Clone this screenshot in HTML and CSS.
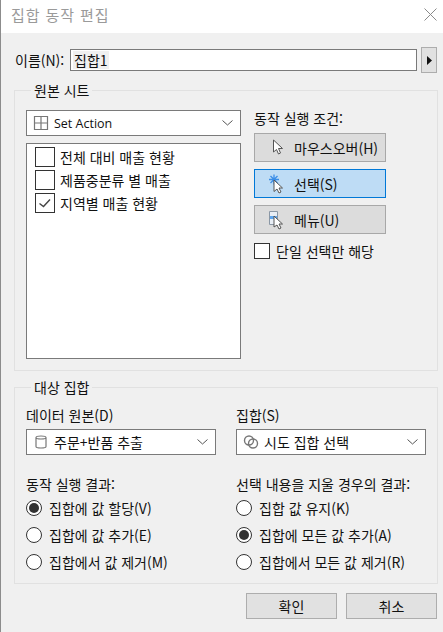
FILE: index.html
```html
<!DOCTYPE html>
<html lang="ko">
<head>
    <meta charset="UTF-8">
    <title>집합 동작 편집</title>
    <link rel="stylesheet" href="styles.css">
</head>
<body>
    <div class="dialog">
        <div class="title-bar">
            <span class="title">집합 동작 편집</span>
            <svg class="close" width="13" height="13" viewBox="0 0 13 13"><path d="M0.5 0.5L12.5 12.5M12.5 0.5L0.5 12.5" stroke="#8a8a8a" fill="none"/></svg>
        </div>
        <div class="body">
            <div class="name-row">
                <label class="name-label">이름(N):</label>
                <div class="name-input"><span class="selected">집합1</span></div>
                <button class="arrow-btn"><svg width="5" height="9" viewBox="0 0 5 9"><path d="M0 0L5 4.5L0 9Z" fill="#111"/></svg></button>
            </div>

            <fieldset class="group source-group">
                <legend>원본 시트</legend>
                <div class="source-left">
                    <div class="select">
                        <svg class="select-icon" width="16" height="16" viewBox="0 0 16 16"><path d="M1.5 1.500H14.500V14.500H1.500ZM8 1.500V14.500M1.500 8H14.500" stroke="#777" stroke-width="1.200" fill="none"/></svg>
                        <span class="latin">Set Action</span>
                        <svg class="chevron" width="11" height="6" viewBox="0 0 11 6"><path d="M0.5 0.5L5.5 5L10.5 0.5" stroke="#555" fill="none"/></svg>
                    </div>
                    <ul class="sheet-list">
                        <li><span class="check"></span>전체 대비 매출 현황</li>
                        <li><span class="check"></span>제품중분류 별 매출</li>
                        <li><span class="check"><svg width="14" height="12" viewBox="0 0 14 12"><path d="M1.5 6.5L5.5 9.5L12 2.5" stroke="#444" stroke-width="1.4" fill="none"/></svg></span>지역별 매출 현황</li>
                    </ul>
                </div>
                <div class="source-right">
                    <div class="field-label condition-label">동작 실행 조건:</div>
                    <button class="trigger">
                        <svg class="trigger-icon" width="14" height="18" viewBox="0 0 14 18"><path d="M1.500 1V13L4.500 10.500L6.500 15L8.500 14L6.500 9.500H10.500Z" fill="#fff" stroke="#555"/></svg>
                        <span>마우스오버(H)</span>
                    </button>
                    <button class="trigger active">
                        <svg class="trigger-icon" width="14" height="18" viewBox="0 0 14 18"><path d="M2 -0.500V9.500M-3 4.500H7M-1.500 1L5.500 8M5.500 1L-1.500 8" stroke="#3b8ee8" stroke-width="1.300"/><path d="M2 5V16.500L5 14L7 18L9 17L7 13H10.500Z" fill="#fff" stroke="#555"/></svg>
                        <span>선택(S)</span>
                    </button>
                    <button class="trigger">
                        <svg class="trigger-icon" width="14" height="18" viewBox="0 0 14 18"><path d="M-2.500 0.500H5.500V13.500H-2.500Z" fill="#e8eef5" stroke="#8a97a5"/><path d="M-2 5H5V8H-2Z" fill="#5ea6ee"/><path d="M2 5V16L5 14L7 18L9 17L7 13H10.500Z" fill="#fff" stroke="#555"/></svg>
                        <span>메뉴(U)</span>
                    </button>
                    <div class="single-only"><span class="check small"></span>단일 선택만 해당</div>
                </div>
            </fieldset>

            <fieldset class="group target-group">
                <legend>대상 집합</legend>
                <div class="target-grid">
                    <div class="target-col">
                        <div class="field-label">데이터 원본(D)</div>
                        <div class="select">
                            <svg class="select-icon" width="16" height="16" viewBox="0 0 16 16"><path d="M3 3.500C3 1.500 13 1.500 13 3.500V12.500C13 14.500 3 14.500 3 12.500ZM3 3.500C3 5.500 13 5.500 13 3.500" stroke="#777" stroke-width="1.200" fill="none"/></svg>
                            <span>주문+반품 추출</span>
                            <svg class="chevron" width="11" height="6" viewBox="0 0 11 6"><path d="M0.500 0.500L5.500 5L10.500 0.500" stroke="#555" fill="none"/></svg>
                        </div>
                        <div class="field-label result-label">동작 실행 결과:</div>
                        <div class="radio-row"><span class="radio on"></span>집합에 값 할당(V)</div>
                        <div class="radio-row"><span class="radio"></span>집합에 값 추가(E)</div>
                        <div class="radio-row"><span class="radio"></span>집합에서 값 제거(M)</div>
                    </div>
                    <div class="target-col">
                        <div class="field-label">집합(S)</div>
                        <div class="select">
                            <svg class="select-icon" width="16" height="16" viewBox="0 0 16 16"><circle cx="6" cy="6.500" r="4.500" stroke="#777" stroke-width="1.400" fill="none"/><circle cx="10" cy="9.500" r="4.500" stroke="#777" stroke-width="1.400" fill="none"/></svg>
                            <span>시도 집합 선택</span>
                            <svg class="chevron" width="11" height="6" viewBox="0 0 11 6"><path d="M0.500 0.500L5.500 5L10.500 0.500" stroke="#555" fill="none"/></svg>
                        </div>
                        <div class="field-label result-label">선택 내용을 지울 경우의 결과:</div>
                        <div class="radio-row"><span class="radio"></span>집합 값 유지(K)</div>
                        <div class="radio-row"><span class="radio on"></span>집합에 모든 값 추가(A)</div>
                        <div class="radio-row"><span class="radio"></span>집합에서 모든 값 제거(R)</div>
                    </div>
                </div>
            </fieldset>

            <div class="footer">
                <button class="footer-btn">확인</button>
                <button class="footer-btn">취소</button>
            </div>
        </div>
    </div>
</body>
</html>
```

FILE: styles.css
```css
html, body {
    height: 100%;
}
body {
    margin: 0;
    background: #f0f0f0;
}
.dialog {
    box-sizing: border-box;
    height: 632px;
    border-left: 1px solid #8c8c8c;
    font-family: "Noto Sans CJK KR", "Noto Sans", sans-serif;
    font-size: 14px;
    color: #111;
    display: flex;
    flex-direction: column;
}
.dialog * {
    box-sizing: border-box;
}
.title-bar {
    height: 33px;
    background: #fff;
    display: flex;
    justify-content: space-between;
    align-items: center;
    padding: 0 6px 4px 10px;
}
.title {
    font-size: 15px;
    color: #9a9a9a;
    letter-spacing: 0.9px;
}
.body {
    flex: 1;
    padding: 14px 5px 0 13px;
}
.name-row {
    display: flex;
    align-items: center;
    height: 26px;
}
.name-label {
    width: 56px;
    padding-left: 1px;
    white-space: nowrap;
}
.name-input {
    width: 347px;
    height: 22px;
    background: #fff;
    border: 1px solid #7a7a7a;
    padding: 1px 2px;
    line-height: 18px;
}
.selected {
    background: #f0f0f0;
    display: inline-block;
    padding: 0 1px;
}
.arrow-btn {
    width: 16px;
    height: 26px;
    margin-left: 4px;
    padding: 0;
    background: #e1e1e1;
    border: 1px solid #adadad;
}
.group {
    margin: 0;
    border: 1px solid #e1e1e1;
    padding: 0 11px;
    width: 424px;
}
.group legend {
    padding: 0 3px;
    margin-left: 5px;
    line-height: 18px;
}
.source-group {
    height: 290px;
    margin-top: 8px;
    display: flex;
    gap: 13px;
    padding-top: 11px;
}
.source-left {
    width: 215px;
    display: flex;
    flex-direction: column;
    gap: 7px;
}
.select {
    height: 26px;
    background: #fff;
    border: 1px solid #7a7a7a;
    display: flex;
    align-items: center;
    padding: 0 7px 0 6px;
    gap: 5px;
}
.latin {
    font-family: "Open Sans", sans-serif;
    font-size: 12.5px;
}
.chevron {
    margin-left: auto;
}
.sheet-list {
    list-style: none;
    margin: 0;
    padding: 1px 8px;
    height: 216px;
    background: #fff;
    border: 1px solid #7a7a7a;
}
.sheet-list li {
    display: flex;
    align-items: center;
    height: 23px;
    gap: 5px;
}
.check {
    width: 20px;
    height: 20px;
    border: 1px solid #333;
    background: #fff;
    display: flex;
    align-items: center;
    justify-content: center;
}
.check.small {
    width: 16px;
    height: 16px;
}
.source-right {
    flex: 1;
}
.field-label {
    line-height: 20px;
}
.condition-label {
    margin-top: -2px;
}
.trigger {
    display: flex;
    align-items: center;
    width: 132px;
    height: 29px;
    margin-top: 7px;
    padding: 0 0 0 17px;
    background: #dcdcdc;
    border: 1px solid #a8a8a8;
    font: inherit;
    color: inherit;
    gap: 8px;
}
.source-right .field-label + .trigger {
    margin-top: 5px;
}
.trigger-icon {
    overflow: visible;
}
.trigger.active {
    background: #bedcf5;
    border-color: #0078d7;
}
.single-only {
    display: flex;
    align-items: center;
    gap: 6px;
    margin-top: 7px;
}
.target-group {
    height: 206px;
    margin-top: 7px;
}
.target-grid {
    display: grid;
    grid-template-columns: 190px 190px;
    gap: 20px;
    padding-top: 9px;
}
.select + .result-label {
    margin-top: 19px;
}
.target-col .select {
    margin-top: 4px;
}
.radio-row {
    display: flex;
    align-items: center;
    height: 27px;
    gap: 7px;
    white-space: nowrap;
}
.radio {
    width: 16px;
    height: 16px;
    border-radius: 50%;
    border: 1px solid #333;
    background: #fff;
    display: flex;
    align-items: center;
    justify-content: center;
}
.radio.on::before {
    content: "";
    width: 10px;
    height: 10px;
    border-radius: 50%;
    background: #333;
}
.footer {
    display: flex;
    justify-content: flex-end;
    gap: 9px;
    margin-top: 9px;
    padding-right: 1px;
}
.footer-btn {
    width: 91px;
    height: 26px;
    background: #e1e1e1;
    border: 1px solid #adadad;
    font: inherit;
    color: inherit;
    padding: 0;
}
```
